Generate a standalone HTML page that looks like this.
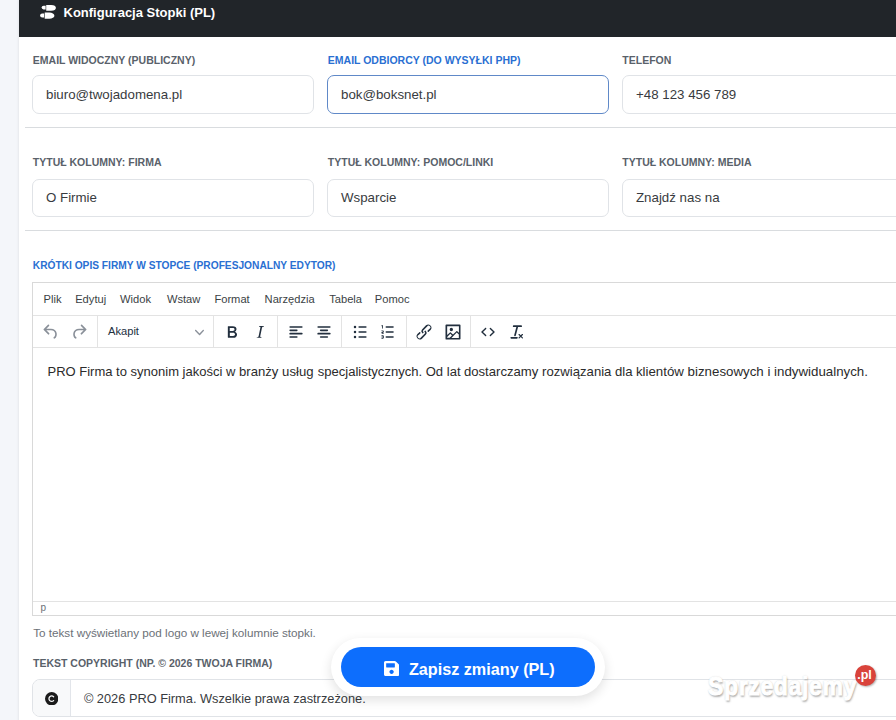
<!DOCTYPE html>
<html><head><meta charset="utf-8">
<style>
*{box-sizing:border-box;margin:0;padding:0}
html,body{width:896px;height:720px;overflow:hidden;background:#f4f6fa;font-family:"Liberation Sans",sans-serif}
.abs{position:absolute}
.t{position:absolute;white-space:nowrap;line-height:1}
#card{position:absolute;left:19px;top:0;width:900px;height:760px;background:#fff;box-shadow:-1px 0 2px rgba(0,0,0,.06)}
#hdr{position:absolute;left:19px;top:0;width:900px;height:37px;background:#212529}
.lbl{font-weight:bold;font-size:10.5px;color:#59616a;text-transform:uppercase}
.lbl.blue{color:#2a6fd2}
.inp{position:absolute;height:38px;border:1px solid #e0e3e7;border-radius:7px;background:#fff}
.inp.focus{border-color:#6089c8}
.val{font-size:13.3px;color:#383b40}
.hr{position:absolute;left:25px;width:880px;height:1px;background:#d9dcdf}
.ed{position:absolute;left:32px;top:282px;width:880px;height:334px;border:1px solid #d9d9d9}
.menu{font-size:11.15px;color:#3b3f45}
.tb{position:absolute;top:321.5px;width:20px;height:20px}
.tb path{fill:#222f3e}
.tb.dis path{fill:#8a9099}
.ct{top:364.6px;font-size:13.15px;color:#2b2b2b}
.sep{position:absolute;top:316px;width:1px;height:31px;background:#e3e3e3}
</style></head><body>
<div id="card"></div>
<div id="hdr"></div>
<svg class="abs" style="left:38px;top:3px;width:20px;height:18px" viewBox="38 3 20 18"><g fill="#fff"><path d="M45.6 5.8H43.6a1.95 1.8 0 0 0 0 3.6H45.6Z"/><path d="M46.2 4.9H51.2a4.7 2.95 0 0 1 0 5.9H46.2Z"/><path d="M44.1 13.5H42.1a2 1.95 0 0 0 0 3.9H44.1Z"/><path d="M44.7 12.6H49.4a5 3.05 0 0 1 0 6.1H44.7Z"/></g></svg>
<div class="t" style="left:63.5px;top:5.7px;font-size:13px;font-weight:bold;color:#fff">Konfiguracja Stopki (PL)</div>

<!-- row 1 -->
<div class="t lbl" style="left:32.8px;top:54.8px">Email widoczny (publiczny)</div>
<div class="t lbl blue" style="left:327.8px;top:54.8px">Email odbiorcy (do wysyłki PHP)</div>
<div class="t lbl" style="left:622.3px;top:54.8px">Telefon</div>
<div class="inp" style="left:32px;top:75px;height:39px;width:281.5px"></div>
<div class="inp focus" style="left:327px;top:75px;height:39px;width:281.5px"></div>
<div class="inp" style="left:622px;top:75px;height:39px;width:300px"></div>
<div class="t val" style="left:46px;top:87.6px">biuro@twojadomena.pl</div>
<div class="t val" style="left:341px;top:87.6px">bok@boksnet.pl</div>
<div class="t val" style="left:636px;top:87.6px">+48 123 456 789</div>
<div class="hr" style="top:127px"></div>

<!-- row 2 -->
<div class="t lbl" style="left:32.8px;top:157.2px">Tytuł kolumny: Firma</div>
<div class="t lbl" style="left:327.8px;top:157.2px">Tytuł kolumny: Pomoc/Linki</div>
<div class="t lbl" style="left:622.3px;top:157.2px">Tytuł kolumny: Media</div>
<div class="inp" style="left:32px;top:179px;height:38px;width:281.5px"></div>
<div class="inp" style="left:327px;top:179px;height:38px;width:281.5px"></div>
<div class="inp" style="left:622px;top:179px;height:38px;width:300px"></div>
<div class="t val" style="left:46px;top:191.3px">O Firmie</div>
<div class="t val" style="left:341px;top:191.3px">Wsparcie</div>
<div class="t val" style="left:636px;top:191.3px">Znajdź nas na</div>
<div class="hr" style="top:230px"></div>

<!-- editor -->
<div class="t lbl blue" style="left:32.8px;top:260.8px;font-size:10.2px">Krótki opis firmy w stopce (profesjonalny edytor)</div>
<div class="ed"></div>
<div class="abs" style="left:33px;top:315px;width:880px;height:1px;background:#e3e3e3"></div>
<div class="abs" style="left:33px;top:347px;width:880px;height:1px;background:#e3e3e3"></div>
<div class="abs" style="left:33px;top:601px;width:880px;height:1px;background:#e3e3e3"></div>
<div class="t menu" style="left:43.6px;top:293.7px">Plik</div>
<div class="t menu" style="left:75.2px;top:293.7px">Edytuj</div>
<div class="t menu" style="left:120px;top:293.7px">Widok</div>
<div class="t menu" style="left:166.9px;top:293.7px">Wstaw</div>
<div class="t menu" style="left:214.4px;top:293.7px">Format</div>
<div class="t menu" style="left:264.6px;top:293.7px">Narzędzia</div>
<div class="t menu" style="left:329.2px;top:293.7px">Tabela</div>
<div class="t menu" style="left:374.8px;top:293.7px">Pomoc</div>

<div class="sep" style="left:97px"></div>
<div class="sep" style="left:213px"></div>
<div class="sep" style="left:277px"></div>
<div class="sep" style="left:341px"></div>
<div class="sep" style="left:406px"></div>
<div class="sep" style="left:470px"></div>

<svg class="tb dis" style="left:41px" viewBox="0 0 24 24"><path d="M6.4 8H12c3.7 0 6.2 2 6.8 5.1.6 2.7-.4 5.6-2.3 6.8a1 1 0 0 1-1-1.8c1.1-.6 1.8-2.7 1.4-4.6-.5-2.1-2.1-3.5-4.9-3.5H6.4l3.300 3.3a1 1 0 1 1-1.4 1.4l-5-5a1 1 0 0 1 0-1.4l5-5a1 1 0 0 1 1.4 1.4L6.4 8Z"/></svg>
<svg class="tb dis" style="left:69.4px" viewBox="0 0 24 24"><path transform="matrix(-1 0 0 1 24 0)" d="M6.4 8H12c3.7 0 6.2 2 6.8 5.1.6 2.7-.4 5.6-2.3 6.8a1 1 0 0 1-1-1.8c1.1-.6 1.8-2.7 1.4-4.6-.5-2.1-2.1-3.5-4.9-3.5H6.4l3.3 3.3a1 1 0 1 1-1.4 1.4l-5-5a1 1 0 0 1 0-1.4l5-5a1 1 0 0 1 1.4 1.4L6.4 8Z"/></svg>
<div class="t menu" style="left:108px;top:325.5px;color:#222f3e">Akapit</div>
<svg class="abs" style="left:195px;top:328px;width:9px;height:9px" viewBox="0 0 10 10"><path fill="#8a9099" d="M8.7 2.2c.3-.3.8-.3 1 0 .4.4.4.9 0 1.2L5.7 7.8c-.3.3-.9.3-1.2 0L.2 3.4a.8.8 0 0 1 0-1.2c.3-.3.8-.3 1.1 0L5 6l3.7-3.8Z"/></svg>

<svg class="tb" style="left:221.8px" viewBox="0 0 24 24"><path d="M7.8 19c-.3 0-.5 0-.6-.2l-.2-.5V5.7c0-.2 0-.4.2-.5l.6-.2h5c1.5 0 2.7.3 3.500 1 .7.6 1.1 1.4 1.1 2.5a3 3 0 0 1-.6 1.9c-.4.6-1 1-1.6 1.200.4.1.9.3 1.300.6s.8.7 1 1.2c.4.4.5 1 .5 1.6 0 1.3-.4 2.3-1.3 3-.8.7-2.1 1-3.8 1H7.8Zm5-8.3c.6 0 1.2-.1 1.6-.5.4-.3.6-.7.6-1.3 0-1.1-.8-1.7-2.3-1.7H9.3v3.5h3.4Zm.5 6c.7 0 1.3-.1 1.7-.4.4-.4.6-.9.6-1.5s-.2-1-.7-1.4c-.4-.3-1-.4-2-.4H9.4v3.8h4Z"/></svg>
<svg class="tb" style="left:250.2px" viewBox="0 0 24 24"><path d="m16.7 4.7-.1.9h-.3c-.6 0-1 0-1.400.3-.3.3-.4.6-.5 1.1l-2.100 9.8v.6c0 .5.4.8 1.4.8h.2l-.2.8H8l.2-.8h.2c1.1 0 1.8-.5 2-1.500l2-9.8.1-.5c0-.6-.4-.8-1.4-.8h-.3l.2-.9h5.8Z"/></svg>
<svg class="tb" style="left:285.5px" viewBox="0 0 24 24"><path d="M5 5h14c.6 0 1 .4 1 1s-.4 1-1 1H5a1 1 0 1 1 0-2Zm0 4h8c.6 0 1 .4 1 1s-.4 1-1 1H5a1 1 0 1 1 0-2Zm0 8h8c.6 0 1 .4 1 1s-.4 1-1 1H5a1 1 0 0 1 0-2Zm0-4h14c.6 0 1 .4 1 1s-.4 1-1 1H5a1 1 0 0 1 0-2Z"/></svg>
<svg class="tb" style="left:313.8px" viewBox="0 0 24 24"><path d="M5 5h14c.6 0 1 .4 1 1s-.4 1-1 1H5a1 1 0 1 1 0-2Zm3 4h8c.6 0 1 .4 1 1s-.4 1-1 1H8a1 1 0 1 1 0-2Zm0 8h8c.6 0 1 .4 1 1s-.4 1-1 1H8a1 1 0 0 1 0-2Zm-3-4h14c.6 0 1 .4 1 1s-.4 1-1 1H5a1 1 0 0 1 0-2Z"/></svg>
<svg class="tb" style="left:349.8px" viewBox="0 0 24 24"><path d="M11 5h8c.6 0 1 .4 1 1s-.4 1-1 1h-8a1 1 0 0 1 0-2Zm0 6h8c.6 0 1 .4 1 1s-.4 1-1 1h-8a1 1 0 0 1 0-2Zm0 6h8c.6 0 1 .4 1 1s-.4 1-1 1h-8a1 1 0 0 1 0-2ZM6 4.5a1.5 1.5 0 1 1 0 3 1.5 1.5 0 0 1 0-3Zm0 6a1.5 1.5 0 1 1 0 3 1.5 1.5 0 0 1 0-3Zm0 6a1.5 1.5 0 1 1 0 3 1.5 1.5 0 0 1 0-3Z"/></svg>
<svg class="tb" style="left:378.2px" viewBox="0 0 24 24"><path d="M10 17h8c.6 0 1 .4 1 1s-.4 1-1 1h-8a1 1 0 0 1 0-2Zm0-6h8c.6 0 1 .4 1 1s-.4 1-1 1h-8a1 1 0 0 1 0-2Zm0-6h8c.6 0 1 .4 1 1s-.4 1-1 1h-8a1 1 0 1 1 0-2ZM6 4v3.5c0 .3-.2.5-.5.5a.5.5 0 0 1-.5-.5V5h-.5a.5.5 0 0 1 0-1H6Zm-1 8.8.2.2h1.3c.3 0 .5.2.5.5s-.2.5-.5.5H4.9a1 1 0 0 1-.9-1V13c0-.4.3-.8.6-1l1.2-.4.2-.3a.2.2 0 0 0-.2-.2H4.5a.5.5 0 0 1-.5-.5c0-.3.2-.5.5-.5h1.3c.7 0 1.2.5 1.2 1.2v.1c0 .5-.3.9-.6 1.1l-1.2.4-.2.3ZM7 17v2c0 .6-.4 1-1 1H4.5a.5.5 0 0 1 0-1h1.2c.2 0 .3-.1.3-.3 0-.2-.1-.3-.3-.3H4.4a.4.4 0 1 1 0-.8h1.3c.2 0 .3-.1.3-.3 0-.2-.1-.3-.3-.3H4.5a.5.5 0 1 1 0-1H6c.6 0 1 .4 1 1Z"/></svg>
<svg class="tb" style="left:414.3px" viewBox="0 0 24 24"><path d="M6.2 12.3a1 1 0 0 1 1.4 1.4l-2 2a2 2 0 1 0 2.6 2.8l4.8-4.8a1 1 0 0 0 0-1.4 1 1 0 1 1 1.4-1.3 2.9 2.9 0 0 1 0 4L9.6 20a3.9 3.9 0 0 1-5.5-5.5l2-2Zm11.6-.6a1 1 0 0 1-1.4-1.4l2-2a2 2 0 1 0-2.600-2.800L11 10.3a1 1 0 0 0 0 1.4A1 1 0 1 1 9.6 13a2.9 2.9 0 0 1 0-4L14.4 4a3.9 3.9 0 0 1 5.5 5.5l-2 2Z"/></svg>
<svg class="tb" style="left:442.6px" viewBox="0 0 24 24"><path d="m5 15.7 3.3-3.2c.3-.3.7-.3 1 0L12 15l4.1-4c.3-.4.8-.4 1 0l2 1.9V5H5v10.7ZM5 18V19h3l2.8-2.9-2-2L5 17.9Zm14-3-2.5-2.4-6.4 6.5H19v-4ZM4 3h16c.6 0 1 .4 1 1v16c0 .6-.4 1-1 1H4a1 1 0 0 1-1-1V4c0-.6.4-1 1-1Zm6 8a2 2 0 1 0 0-4 2 2 0 0 0 0 4Z"/></svg>
<svg class="tb" style="left:478.4px" viewBox="0 0 24 24"><path d="M9.8 15.7c.3.3.3.8 0 1-.3.4-.9.4-1.2 0l-4.4-4.1a.8.8 0 0 1 0-1.2l4.4-4.2c.3-.3.9-.3 1.2 0 .3.3.3.8 0 1.1L6 12l3.8 3.7ZM14.2 15.7c-.3.3-.3.8 0 1 .4.4.9.4 1.2 0l4.4-4.1c.3-.3.3-.9 0-1.2l-4.4-4.2a.8.8 0 0 0-1.2 0c-.3.3-.3.8 0 1.1L18 12l-3.8 3.7Z"/></svg>
<svg class="tb" style="left:506.8px" viewBox="0 0 24 24"><path d="M13.2 6a1 1 0 0 1 0 .2l-2.6 10a1 1 0 0 1-1 .8h-.2a.8.8 0 0 1-.8-1l2.6-10H8a1 1 0 1 1 0-2h9a1 1 0 0 1 0 2h-3.8ZM5 18h7a1 1 0 0 1 0 2H5a1 1 0 0 1 0-2Zm13 1.5L16.5 18 15 19.5a.7.7 0 0 1-1-1l1.5-1.5-1.5-1.5a.7.7 0 0 1 1-1l1.5 1.5 1.5-1.5a.7.7 0 0 1 1 1L17.5 17l1.5 1.5a.7.7 0 0 1-1 1Z"/></svg>

<div class="t ct" style="left:47.5px;font-size:13px">PRO Firma to synonim jakości w</div><div class="t ct" style="left:239px">branży usług</div><div class="t ct" style="left:317.7px;font-size:13.05px">specjalistycznych. Od lat</div><div class="t ct" style="left:463.9px">dostarczamy rozwiązania dla</div><div class="t ct" style="left:635.9px;font-size:13.3px">klientów biznesowych i indywidualnych.</div>
<div class="t" style="left:40.5px;top:602.5px;font-size:10px;color:#6b6f76">p</div>

<div class="t" style="left:33.2px;top:626.5px;font-size:11.7px;color:#6c7177">To tekst wyświetlany pod logo w lewej kolumnie stopki.</div>
<div class="t lbl" style="left:33px;top:657.8px">Tekst copyright (np. © 2026 Twoja Firma)</div>

<div class="inp" style="left:32px;top:679px;height:38px;width:900px;border-radius:8px"></div>
<div class="abs" style="left:33px;top:680px;width:38px;height:36px;background:#f8f9fa;border-radius:7px 0 0 7px;border-right:1px solid #e2e5ea"></div>
<svg class="abs" style="left:45px;top:691.7px;width:13.4px;height:13.4px" viewBox="0 0 512 512"><path fill="#1b1b1b" d="M256 512A256 256 0 1 0 256 0a256 256 0 1 0 0 512zM199.4 312.6c31.2 31.2 81.9 31.2 113.1 0c9.4-9.4 24.6-9.4 33.9 0s9.4 24.6 0 33.9c-50 50-131 50-181 0s-50-131 0-181s131-50 181 0c9.4 9.4 9.4 24.6 0 33.9s-24.6 9.4-33.9 0c-31.2-31.2-81.9-31.2-113.1 0s-31.2 81.9 0 113.1z"/></svg>
<div class="t val" style="left:83.9px;top:693.2px;font-size:12.8px">© 2026 PRO Firma. Wszelkie prawa zastrzeżone.</div>

<!-- watermark -->
<div class="t" style="left:708px;top:674.3px;font-size:25.5px;font-weight:bold;color:#fff;letter-spacing:.75px;transform:scaleX(.9);transform-origin:left top;-webkit-text-stroke:1.1px #fff;text-shadow:0 0 1.5px rgba(0,0,0,.35),1px 2px 2px rgba(0,0,0,.3)">Sprzedajemy</div>
<div class="abs" style="left:854.8px;top:665.1px;width:21px;height:21px;border-radius:50%;background:#d9433b;box-shadow:1px 1px 2px rgba(0,0,0,.3)"></div>
<div class="t" style="left:857.2px;top:669px;font-size:12.5px;font-weight:bold;color:#fff">.pl</div>

<!-- floating save button -->
<div class="abs" style="left:331px;top:638px;width:274px;height:58px;border-radius:29px;background:#fff;box-shadow:0 4px 12px rgba(0,0,0,.12)"></div>
<div class="abs" style="left:340.6px;top:647.3px;width:254.7px;height:39.6px;border-radius:20px;background:#0d6efd"></div>
<svg class="abs" style="left:384.3px;top:660.7px;width:15.2px;height:15.2px" viewBox="0 32 448 448"><path fill="#fff" d="M433.941 129.941l-83.882-83.882A48 48 0 0 0 316.118 32H48C21.490 32 0 53.490 0 80v352c0 26.510 21.490 48 48 48h352c26.510 0 48-21.490 48-48V163.882a48 48 0 0 0-14.059-33.941zM224 416c-35.346 0-64-28.654-64-64 0-35.346 28.654-64 64-64s64 28.654 64 64c0 35.346-28.654 64-64 64zm96-304.520V212c0 6.627-5.373 12-12 12H76c-6.627 0-12-5.373-12-12V108c0-6.627 5.373-12 12-12h228.520c3.183 0 6.235 1.264 8.485 3.515l3.480 3.480A11.996 11.996 0 0 1 320 111.480z"/></svg>
<div class="t" style="left:408.9px;top:661.2px;font-size:16.2px;font-weight:bold;color:#fff">Zapisz zmiany (PL)</div>
</body></html>
